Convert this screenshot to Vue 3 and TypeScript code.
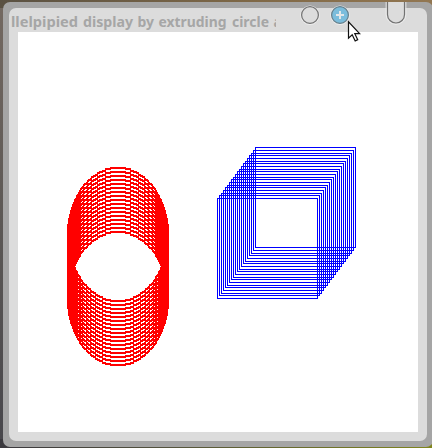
<script setup lang="ts">
/* World units are stretched vertically by the 4:3 projection */
const ASPECT = 4 / 3
const RADIUS = 50

/* Hollow squares swept diagonally, one pixel wide outlines */
const squares = Array.from({ length: 20 }, (_, i) => ({
  x: 199 + 2 * i,
  y: 166 - Math.round(2 * i * ASPECT),
}))

/* Integer midpoint circle, stretched and plotted with 2x2 pixel dots */
function circleDots(left: number, top: number): string {
  const seen = new Set<string>()
  const plot = (x: number, y: number) =>
    seen.add(`${left + RADIUS + x} ${Math.floor(top + (y + RADIUS) * ASPECT)}`)
  let x = 0
  let y = RADIUS
  let p = 1 - RADIUS
  while (x <= y) {
    for (const sx of [-1, 1]) {
      for (const sy of [-1, 1]) {
        plot(sx * x, sy * y)
        plot(sx * y, sy * x)
      }
    }
    x++
    if (p < 0) {
      p += 2 * x + 1
    } else {
      y--
      p += 2 * (x - y) + 1
    }
  }
  return [...seen].map((dot) => `M${dot}h2v2h-2z`).join('')
}

const circles = Array.from({ length: 17 }, (_, i) => circleDots(49, 135.5 + 4 * i))

const words = [
  { text: 'llelpipied', x: 0, width: 67 },
  { text: 'display', x: 72, width: 50 },
  { text: 'by', x: 126.5, width: 16.5 },
  { text: 'extruding', x: 147.5, width: 68 },
  { text: 'circle', x: 221, width: 37 },
  { text: 'a', x: 262.5, width: 8 },
]
</script>

<template>
  <div class="desktop">
    <div class="frame">
      <div class="body">
        <header class="titlebar">
          <svg class="title" width="265" height="24">
            <text v-for="w in words" :key="w.text" :x="w.x" y="19" :textLength="w.width" lengthAdjust="spacingAndGlyphs">{{ w.text }}</text>
          </svg>
        </header>
        <svg class="plot" width="400" height="400" viewBox="0 0 400 400" shape-rendering="crispEdges">
          <path v-for="(d, i) in circles" :key="'c' + i" :d="d" fill="#f00" />
          <rect v-for="(s, i) in squares" :key="'s' + i" :x="s.x + 0.5" :y="s.y + 0.5" width="100" height="100" fill="none" stroke="#00f" />
        </svg>
      </div>
    </div>
    <svg class="controls" width="132" height="50" viewBox="0 0 132 50">
      <g fill="none" stroke="#ededed" stroke-width="1">
        <circle cx="22" cy="15.3" r="9.3" />
        <circle cx="52" cy="15.3" r="9.3" />
        <path d="M98.2 2v13a9.8 9.3 0 0 0 19.6 0V2" />
      </g>
      <circle cx="22" cy="15" r="8.4" fill="#dcdcdc" stroke="#727272" stroke-width="1.2" />
      <circle cx="52" cy="15" r="8.4" fill="#7bbddc" stroke="#667f8b" stroke-width="1.2" />
      <path d="M48 15h8M52 11v8" stroke="#e2e7e9" stroke-width="2" />
      <path d="M99.5 2v12.5a8.5 8.5 0 0 0 17 0V2" fill="#dcdcdc" stroke="#727272" stroke-width="1.2" />
      <path d="M60.5 21.8v16.4l3.7-3.5 3 6.2 2.5-1.2-2.9-6h4.8z" fill="#fff" stroke="#111" stroke-width="1.2" />
    </svg>
  </div>
</template>

<style>
body {
  margin: 0;
  overflow: hidden;
}
</style>

<style scoped>
.desktop {
  position: relative;
  box-sizing: border-box;
  width: 432px;
  height: 448px;
  padding: 2px 0 1px 3px;
  overflow: hidden;
  background:
    linear-gradient(90deg, #5a5142, #806947 60%, #927752) top / 100% 8px no-repeat,
    linear-gradient(90deg, #3b393e 0 3px, #55543e 40%, #80851b) bottom / 100% 9px no-repeat,
    linear-gradient(#746961, #5c5855 50%, #47464b);
}
.frame {
  box-sizing: border-box;
  width: 430px;
  height: 445px;
  padding: 6px;
  border-radius: 7px;
  background: #a5a5a5;
}
.body {
  box-sizing: border-box;
  width: 418px;
  height: 433px;
  padding: 0 9px 9px;
  border-radius: 7px;
  background: #dcdcdc;
}
.titlebar {
  height: 24px;
  margin-left: -7px;
}
.title,
.plot {
  display: block;
}
.title {
  overflow: hidden;
  font: 700 15px 'Noto Sans', 'Open Sans', sans-serif;
  fill: #a6a6a6;
}
.plot {
  background: #fff;
}
.controls {
  position: absolute;
  top: 0;
  left: 288px;
}
</style>
